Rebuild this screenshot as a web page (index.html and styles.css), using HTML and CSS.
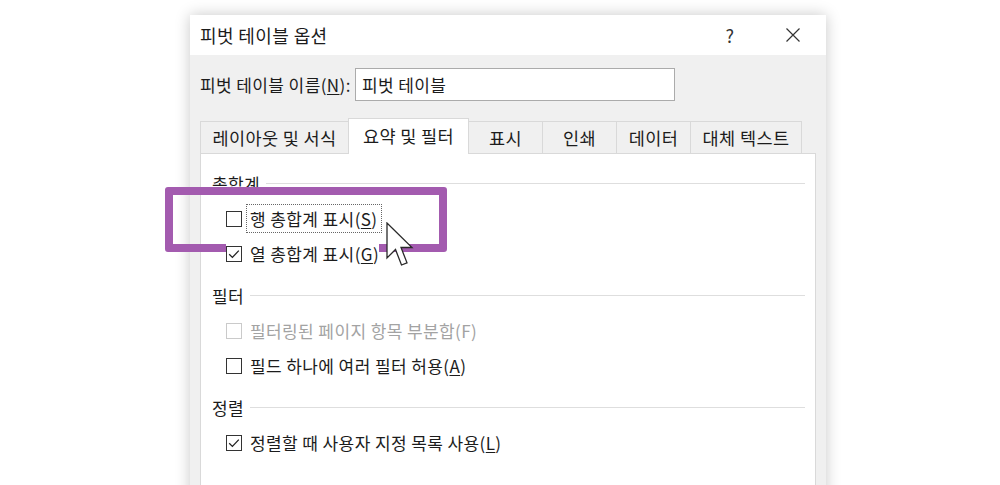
FILE: index.html
```html
<!DOCTYPE html>
<html>
	<head>
		<title>피벗 테이블 옵션</title>
		<link rel="stylesheet" href="styles.css">
	</head>
	<body>
		<div class="dialog">
			<div class="titlebar">
				<span class="title">피벗 테이블 옵션</span>
				<span class="help">?</span>
				<span class="close">
					<svg width="16" height="16" viewBox="0 0 16 16">
						<path d="M1.5 1.5 L14.5 14.5 M14.5 1.5 L1.5 14.5" stroke="#333" stroke-width="1.2" fill="none" />
					</svg>
				</span>
			</div>
			<div class="dialog-body">
				<div class="name-row">
					<label for="pivot-name">피벗 테이블 이름(<u>N</u>):</label>
					<input type="text" id="pivot-name" value="피벗 테이블" />
				</div>
				<div class="tabs">
					<div class="tab tab-layout">레이아웃 및 서식</div>
					<div class="tab tab-active">요약 및 필터</div>
					<div class="tab tab-small">표시</div>
					<div class="tab tab-small">인쇄</div>
					<div class="tab tab-small">데이터</div>
					<div class="tab tab-alt">대체 텍스트</div>
				</div>
				<div class="panel">
					<div class="group-title">총합계</div>
					<div class="check-row">
						<span class="check-inner">
							<span class="box"></span>
							<span class="focus">행 총합계 표시(<u>S</u>)</span>
						</span>
					</div>
					<div class="check-row covered">
						<span class="check-inner">
							<span class="box checked">
								<svg width="16" height="16" viewBox="0 0 16 16"><polyline points="3.2,8.2 6.4,11.4 12.8,4.6" /></svg>
							</span>
							<span>열 총합계 표시(<u>G</u>)</span>
						</span>
					</div>

					<div class="group-title">필터</div>
					<div class="check-row disabled">
						<span class="check-inner">
							<span class="box"></span>
							<span>필터링된 페이지 항목 부분합(F)</span>
						</span>
					</div>
					<div class="check-row">
						<span class="check-inner">
							<span class="box"></span>
							<span>필드 하나에 여러 필터 허용(<u>A</u>)</span>
						</span>
					</div>

					<div class="group-title">정렬</div>
					<div class="check-row">
						<span class="check-inner">
							<span class="box checked">
								<svg width="16" height="16" viewBox="0 0 16 16"><polyline points="3.2,8.2 6.4,11.4 12.8,4.6" /></svg>
							</span>
							<span>정렬할 때 사용자 지정 목록 사용(<u>L</u>)</span>
						</span>
					</div>

					<!-- 강조 표시 -->
					<div class="highlight"></div>
					<svg class="cursor" width="30" height="46" viewBox="0 0 30 46">
						<path d="M1 1 L1 36 L9.5 27.5 L15.5 43 L21 40.8 L15 25.5 L26 25.5 Z" fill="#fff" stroke="#2a2a2a" stroke-width="1.3" stroke-linejoin="miter" />
					</svg>
				</div>
			</div>
		</div>
	</body>
</html>
```

FILE: styles.css
```css
html,
body {
	height: 485px;
	overflow: hidden;
}
body {
	margin: 0;
	background: #fff;
	font-family: "Noto Sans CJK KR", "Noto Sans", sans-serif;
	color: #1c1c1c;
	letter-spacing: 0.4px;
}
u {
	text-decoration: underline;
	text-underline-offset: 2px;
}
.dialog {
	margin: 15px 0 0 190px;
	width: 636px;
	height: 490px;
	background: #f0f0f0;
	box-shadow: 0 0 14px rgba(0, 0, 0, 0.22);
	position: relative;
}
.titlebar {
	height: 40px;
	background: #fff;
	display: flex;
	align-items: center;
	padding: 0 10px;
	font-size: 18px;
	gap: 17px;
}
.title {
	flex: 1;
}
.help,
.close {
	width: 46px;
	height: 40px;
	display: flex;
	align-items: center;
	justify-content: center;
}
.help {
	font-size: 18px;
	color: #333;
}
.dialog-body {
	padding: 0 10px;
}
.name-row {
	display: flex;
	align-items: center;
	gap: 4px;
	padding-top: 13px;
	font-size: 17px;
}
.name-row label {
	width: 151px;
	white-space: nowrap;
}
.name-row input {
	width: 320px;
	height: 33px;
	box-sizing: border-box;
	border: 1px solid #ababab;
	padding: 0 6px;
	font-family: inherit;
	font-size: 17px;
	letter-spacing: 0.4px;
	color: #1c1c1c;
	background: #fff;
}
.tabs {
	display: flex;
	align-items: flex-start;
	height: 36px;
	margin-top: 17px;
	position: relative;
	z-index: 1;
}
.tab {
	box-sizing: border-box;
	height: 33px;
	margin-top: 3px;
	border: 1px solid #d9d9d9;
	background: #f0f0f0;
	margin-left: -1px;
	font-size: 17.5px;
	display: flex;
	align-items: center;
	justify-content: center;
	padding-bottom: 1px;
}
.tab-layout {
	width: 149px;
	margin-left: 0;
}
.tab-active {
	width: 121px;
	height: 36px;
	margin-top: 0;
	background: #fff;
	border-bottom: none;
	padding-bottom: 3px;
}
.tab-small {
	width: 75px;
}
.tab-alt {
	width: 112px;
}
.panel {
	position: relative;
	margin-top: -1px;
	height: 340px;
	background: #fff;
	border: 1px solid #d9d9d9;
	padding: 5px 10px 0 11px;
}
.group-title {
	display: flex;
	align-items: center;
	gap: 6px;
	height: 24px;
	margin: 12px 0 6px;
	font-size: 17px;
}
.group-title::after {
	content: "";
	flex: 1;
	height: 1px;
	background: #dedede;
}
.check-row {
	height: 35px;
	padding-left: 14px;
	font-size: 17px;
}
.check-inner {
	display: inline-flex;
	align-items: center;
	height: 35px;
	background: #fff;
}
.covered .check-inner {
	position: relative;
	z-index: 2;
}
.box {
	width: 16px;
	height: 16px;
	box-sizing: border-box;
	border: 1px solid #333;
	margin-right: 8px;
	position: relative;
}
.box svg {
	position: absolute;
	left: -1px;
	top: -1px;
}
.box polyline {
	fill: none;
	stroke: #222;
	stroke-width: 1.3;
}
.focus {
	outline: 1px dotted #666;
	outline-offset: 1px;
	margin-left: -2px;
	padding: 0 2px;
}
.disabled {
	color: #a3a3a3;
}
.disabled .box {
	border-color: #cacaca;
}
.highlight {
	position: absolute;
	left: -36px;
	top: 33px;
	width: 282px;
	height: 65px;
	box-sizing: border-box;
	border: 8px solid #a35baf;
	border-radius: 3px;
	z-index: 1;
}
.cursor {
	position: absolute;
	left: 185px;
	top: 68px;
	z-index: 3;
}
```
